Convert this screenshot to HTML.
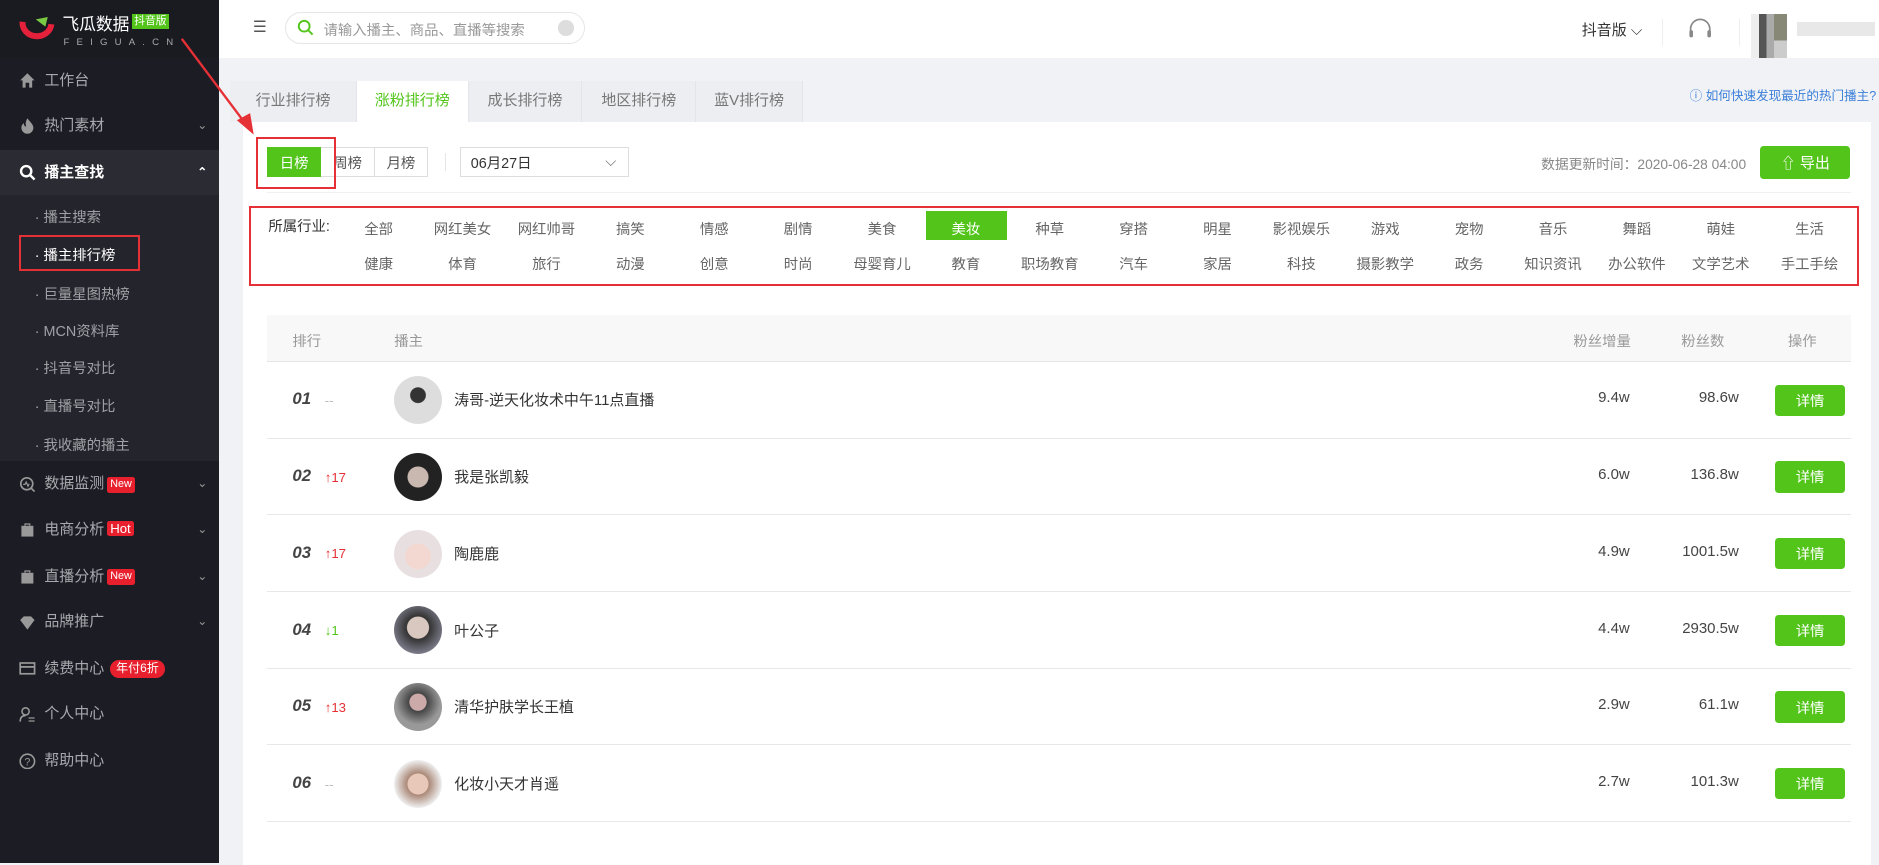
<!DOCTYPE html>
<html><head><meta charset="utf-8">
<style>
html{zoom:1.19834;background:#f0f2f5}
*{margin:0;padding:0;box-sizing:border-box}
body{width:1568px;height:700px;overflow:hidden;background:#f0f2f5;font-family:"Liberation Sans","Noto Sans CJK SC",sans-serif;font-size:12px;color:#555;position:relative}
.abs{position:absolute}
#side{left:0;top:0;width:183px;height:720px;background:#1c1c24}
.mi{position:absolute;left:0;width:183px;height:38px;line-height:38px;color:#a8a8ae;font-size:12.5px;padding-left:37px}
.mi .ic{position:absolute;left:16px;top:12px;width:14px;height:14px}
.mi .ar{position:absolute;right:10px;top:0;font-size:10px;color:#999}
.sub{position:absolute;left:29px;color:#a0a0a6;font-size:12px}
.badge{display:inline-block;background:#e8202e;color:#fff;font-size:9px;line-height:13px;padding:0 3px;border-radius:2px;margin-left:2px;vertical-align:1px}
#top{left:183px;top:0;width:1385px;height:48px;background:#fff}
.tab{position:absolute;top:68px;height:34px;line-height:34px;text-align:center;font-size:12.5px;color:#777;background:#eceef2;border-right:1px solid #e3e5ea}
#panel{left:203px;top:102px;width:1358px;height:620px;background:#fff}
.btn{position:absolute;top:123px;height:25px;display:flex;align-items:center;justify-content:center;border:1px solid #ddd;font-size:12px;color:#555;background:#fff}
.ind{position:absolute;font-size:12px;color:#666;width:70px;text-align:center}
.red{position:absolute;border:2px solid #e53036}
.row{position:absolute;left:223px;width:1322px;height:64px;border-bottom:1px solid #e8e8e8}
.rk{position:absolute;left:21px;top:23px;font-style:italic;font-weight:bold;font-size:14px;color:#444}
.ch{position:absolute;left:48px;top:26px;font-size:11px}
.av{position:absolute;left:106px;top:12px;width:40px;height:40px;border-radius:50%}
.nm{position:absolute;left:156px;top:23px;font-size:12.5px;color:#333}
.v1{position:absolute;right:185px;top:23px;font-size:12.5px;color:#444}
.v2{position:absolute;right:94px;top:23px;font-size:12.5px;color:#444}
.dt{position:absolute;left:1258px;top:19px;width:59px;height:26px;display:flex;align-items:center;justify-content:center;background:#52c41a;color:#fff;border-radius:3px;font-size:12px}
</style></head><body>
<div id="side" class="abs">
  <div class="abs" style="left:0;top:0;width:183px;height:48px;background:#1a1a21"></div>
  <svg class="abs" style="left:16px;top:14px" width="32" height="22" viewBox="0 0 32 22"><path d="M3 4 A12 11 0 0 0 27 6" stroke="#e5203a" stroke-width="5" fill="none"/><path d="M14 2 L24 0 L22 8 Z" fill="#7ac943"/></svg>
  <div class="abs" style="left:52px;top:9px;color:#fff;font-size:14px">飞瓜数据</div>
  <div class="abs" style="left:110px;top:12px;background:#52c41a;color:#fff;font-size:9px;line-height:12px;padding:0 2px">抖音版</div>
  <div class="abs" style="left:53px;top:31px;color:#aaa;font-size:8px;letter-spacing:6px">FEIGUA.CN</div>
  <div class="mi" style="top:48px"><svg class="ic" viewBox="0 0 14 14"><path d="M7 1 L13 7 H11 V13 H8.5 V9 H5.5 V13 H3 V7 H1 Z" fill="#999"/></svg>工作台</div>
  <div class="mi" style="top:86px"><svg class="ic" viewBox="0 0 14 14"><path d="M7 1 C9 4 12 6 12 9 A5 5 0 0 1 2 9 C2 7 3 6 4 5 C4 7 5 8 6 8 C5 5 6 3 7 1Z" fill="#999"/></svg>热门素材<span class="ar">⌄</span></div>
  <div class="mi" style="top:125px;background:#2b2b33;color:#fff;font-weight:bold"><svg class="ic" viewBox="0 0 14 14"><circle cx="6" cy="6" r="4.3" stroke="#fff" stroke-width="2" fill="none"/><path d="M9 9 L13 13" stroke="#fff" stroke-width="2"/></svg>播主查找<span class="ar" style="color:#fff">⌃</span></div>
  <div class="abs" style="left:0;top:163px;width:183px;height:222px;background:#24242c"></div>
  <div class="sub" style="top:172px">· 播主搜索</div>
  <div class="sub" style="top:204px;color:#fff">· 播主排行榜</div>
  <div class="sub" style="top:236px">· 巨量星图热榜</div>
  <div class="sub" style="top:267px">· MCN资料库</div>
  <div class="sub" style="top:298px">· 抖音号对比</div>
  <div class="sub" style="top:330px">· 直播号对比</div>
  <div class="sub" style="top:362px">· 我收藏的播主</div>
  <div class="red" style="left:16px;top:196px;width:101px;height:30px"></div>
  <div class="mi" style="top:385px"><svg class="ic" viewBox="0 0 14 14"><circle cx="6.5" cy="6.5" r="5" stroke="#999" stroke-width="1.4" fill="none"/><path d="M10 10 L13 13" stroke="#999" stroke-width="1.4"/><path d="M3.5 7 L5 7 L6 5 L7.5 8.5 L8.5 6.5" stroke="#999" fill="none"/></svg>数据监测<span class="badge">New</span><span class="ar">⌄</span></div>
  <div class="mi" style="top:423px"><svg class="ic" viewBox="0 0 14 14"><rect x="2" y="4" width="10" height="9" fill="#999"/><path d="M5 4 V2.5 H9 V4" stroke="#999" fill="none"/></svg>电商分析<span class="badge" style="font-size:11px">Hot</span><span class="ar">⌄</span></div>
  <div class="mi" style="top:462px"><svg class="ic" viewBox="0 0 14 14"><rect x="2" y="4" width="10" height="9" fill="#999"/><path d="M5 4 V2.5 H9 V4" stroke="#999" fill="none"/></svg>直播分析<span class="badge">New</span><span class="ar">⌄</span></div>
  <div class="mi" style="top:500px"><svg class="ic" viewBox="0 0 14 14"><path d="M1 5 L4 2 H10 L13 5 L7 13 Z" fill="#999"/></svg>品牌推广<span class="ar">⌄</span></div>
  <div class="mi" style="top:539px"><svg class="ic" viewBox="0 0 14 14"><rect x="1" y="2.5" width="12" height="9" stroke="#999" stroke-width="1.4" fill="none"/><rect x="1" y="5" width="12" height="1.5" fill="#999"/></svg>续费中心<span class="badge" style="border-radius:8px;font-size:10px;line-height:15px;padding:0 5px;margin-left:5px">年付6折</span></div>
  <div class="mi" style="top:577px"><svg class="ic" viewBox="0 0 14 14"><circle cx="5.5" cy="4.5" r="3" stroke="#999" stroke-width="1.3" fill="none"/><path d="M1 13 C1 9 3 8 5.5 8" stroke="#999" stroke-width="1.3" fill="none"/><path d="M8 10 H13 M8 12.5 H13" stroke="#999"/></svg>个人中心</div>
  <div class="mi" style="top:616px"><svg class="ic" viewBox="0 0 14 14"><circle cx="7" cy="7" r="6" stroke="#999" stroke-width="1.3" fill="none"/><text x="7" y="10.5" font-size="9" text-anchor="middle" fill="#999" font-family="Liberation Sans">?</text></svg>帮助中心</div>
</div>

<div id="top" class="abs">
  <div class="abs" style="left:28px;top:15px;font-size:13px;color:#555">☰</div>
  <div class="abs" style="left:55px;top:10px;width:250px;height:27px;border:1px solid #e6e6e6;border-radius:14px"></div>
  <svg class="abs" style="left:65px;top:16px" width="14" height="15"><circle cx="6" cy="6" r="4.5" stroke="#52c41a" stroke-width="1.6" fill="none"/><path d="M9.5 9.5 L13 13" stroke="#52c41a" stroke-width="1.6"/></svg>
  <div class="abs" style="left:87px;top:16px;color:#999;font-size:12px">请输入播主、商品、直播等搜索</div>
  <div class="abs" style="left:283px;top:17px;width:13px;height:13px;border-radius:50%;background:#ddd"></div>
  <div class="abs" style="left:1137px;top:16px;color:#333;font-size:12.5px">抖音版 ⌵</div>
  <div class="abs" style="left:1204px;top:16px;width:1px;height:22px;background:#eee"></div>
  <svg class="abs" style="left:1225px;top:14px" width="22" height="22"><path d="M3 13 V10 A8 8 0 0 1 19 10 V13" stroke="#888" stroke-width="1.4" fill="none"/><rect x="2" y="11" width="3" height="6" rx="1.5" fill="#888"/><rect x="17" y="11" width="3" height="6" rx="1.5" fill="#888"/></svg>
  <div class="abs" style="left:1268px;top:16px;width:1px;height:22px;background:#eee"></div>
  <div class="abs" style="left:1278px;top:12px;width:22px;height:36px;background:linear-gradient(90deg,#eee 0 30%,#555 30% 60%,#aaa 60%)"></div>
  <div class="abs" style="left:1297px;top:12px;width:11px;height:36px;background:linear-gradient(#887 0 60%,#ccc 60%)"></div>
  <div class="abs" style="left:1317px;top:18px;width:65px;height:12px;background:#e8e8e8"></div>
</div>

<div class="tab" style="left:192px;width:106px">行业排行榜</div>
<div class="tab" style="left:298px;width:93px;background:#fff;color:#52c41a">涨粉排行榜</div>
<div class="tab" style="left:391px;width:95px">成长排行榜</div>
<div class="tab" style="left:486px;width:95px">地区排行榜</div>
<div class="tab" style="left:581px;width:89px">蓝V排行榜</div>
<div class="abs" style="left:1410px;top:71px;color:#3b7fd9;font-size:10.5px">ⓘ 如何快速发现最近的热门播主?</div>

<div id="panel" class="abs"></div>
<div class="btn" style="left:223px;width:45px;background:#52c41a;border-color:#52c41a;color:#fff">日榜</div>
<div class="btn" style="left:268px;width:45px;border-left:none">周榜</div>
<div class="btn" style="left:313px;width:44px;border-left:none">月榜</div>
<div class="abs" style="left:371px;top:128px;width:1px;height:15px;background:#e5e5e5"></div>
<div class="btn" style="left:384px;width:141px;justify-content:flex-start;padding-left:8px;color:#333">06月27日<span style="position:absolute;right:10px;color:#666">⌵</span></div>
<div class="abs" style="left:1286px;top:128px;color:#888;font-size:11.5px">数据更新时间：2020-06-28 04:00</div>
<div class="abs" style="left:1469px;top:122px;width:75px;height:27px;background:#52c41a;border-radius:3px;color:#fff;display:flex;align-items:center;justify-content:center;font-size:12.5px">⇧ 导出</div>
<div class="abs" style="left:223px;top:160px;width:1322px;height:1px;background:#f0f0f0"></div>
<div class="red" style="left:214px;top:114px;width:66px;height:44px"></div>

<div class="abs" style="left:224px;top:179px;color:#333;font-size:12px">所属行业:</div>
<div class="abs" style="left:773px;top:176px;width:67px;height:24px;background:#52c41a"></div>
<div class="red" style="left:208px;top:172px;width:1343px;height:67px"></div>

<div class="abs" style="left:223px;top:263px;width:1322px;height:39px;background:#f8f8f8;border-bottom:1px solid #e5e5e5"></div>
<div class="abs" style="left:244px;top:275px;color:#999">排行</div>
<div class="abs" style="left:329px;top:275px;color:#999">播主</div>
<div class="abs" style="left:1313px;top:275px;color:#999">粉丝增量</div>
<div class="abs" style="left:1403px;top:275px;color:#999">粉丝数</div>
<div class="abs" style="left:1492px;top:275px;color:#999">操作</div>

<div class="row" style="top:302px"><div class="rk">01</div><div class="ch" style="color:#bbb">--</div><div class="av" style="background:radial-gradient(circle at 50% 40%,#333 0 20%,#ddd 22%)"></div><div class="nm">涛哥-逆天化妆术中午11点直播</div><div class="v1">9.4w</div><div class="v2">98.6w</div><div class="dt">详情</div></div>
<div class="row" style="top:366px"><div class="rk">02</div><div class="ch" style="color:#e53036">↑17</div><div class="av" style="background:radial-gradient(circle at 50% 50%,#c8b8b0 0 30%,#222 32%)"></div><div class="nm">我是张凯毅</div><div class="v1">6.0w</div><div class="v2">136.8w</div><div class="dt">详情</div></div>
<div class="row" style="top:430px"><div class="rk">03</div><div class="ch" style="color:#e53036">↑17</div><div class="av" style="background:radial-gradient(circle at 50% 55%,#f2d8d0 0 35%,#e8e0e0 37%)"></div><div class="nm">陶鹿鹿</div><div class="v1">4.9w</div><div class="v2">1001.5w</div><div class="dt">详情</div></div>
<div class="row" style="top:494px"><div class="rk">04</div><div class="ch" style="color:#52c41a">↓1</div><div class="av" style="background:radial-gradient(circle at 50% 45%,#d8c8c0 0 30%,#333 32%,#889 80%)"></div><div class="nm">叶公子</div><div class="v1">4.4w</div><div class="v2">2930.5w</div><div class="dt">详情</div></div>
<div class="row" style="top:558px"><div class="rk">05</div><div class="ch" style="color:#e53036">↑13</div><div class="av" style="background:radial-gradient(circle at 50% 40%,#caa 0 22%,#444 24%,#999 60%)"></div><div class="nm">清华护肤学长王植</div><div class="v1">2.9w</div><div class="v2">61.1w</div><div class="dt">详情</div></div>
<div class="row" style="top:622px"><div class="rk">06</div><div class="ch" style="color:#bbb">--</div><div class="av" style="background:radial-gradient(circle at 50% 50%,#e8c8b8 0 30%,#a87 32%,#eee 70%)"></div><div class="nm">化妆小天才肖遥</div><div class="v1">2.7w</div><div class="v2">101.3w</div><div class="dt">详情</div></div>

<svg class="abs" style="left:148px;top:28px" width="70" height="86"><path d="M4 4 L58 76" stroke="#e53036" stroke-width="2"/><path d="M64 84 L50 72 L61 66 Z" fill="#e53036"/></svg>

<div class="ind" style="left:281px;top:182px">全部</div>
<div class="ind" style="left:351px;top:182px">网红美女</div>
<div class="ind" style="left:421px;top:182px">网红帅哥</div>
<div class="ind" style="left:491px;top:182px">搞笑</div>
<div class="ind" style="left:561px;top:182px">情感</div>
<div class="ind" style="left:631px;top:182px">剧情</div>
<div class="ind" style="left:701px;top:182px">美食</div>
<div class="ind" style="left:771px;top:182px;color:#fff">美妆</div>
<div class="ind" style="left:841px;top:182px">种草</div>
<div class="ind" style="left:911px;top:182px">穿搭</div>
<div class="ind" style="left:981px;top:182px">明星</div>
<div class="ind" style="left:1051px;top:182px">影视娱乐</div>
<div class="ind" style="left:1121px;top:182px">游戏</div>
<div class="ind" style="left:1191px;top:182px">宠物</div>
<div class="ind" style="left:1261px;top:182px">音乐</div>
<div class="ind" style="left:1331px;top:182px">舞蹈</div>
<div class="ind" style="left:1401px;top:182px">萌娃</div>
<div class="ind" style="left:1475px;top:182px">生活</div>
<div class="ind" style="left:281px;top:211px">健康</div>
<div class="ind" style="left:351px;top:211px">体育</div>
<div class="ind" style="left:421px;top:211px">旅行</div>
<div class="ind" style="left:491px;top:211px">动漫</div>
<div class="ind" style="left:561px;top:211px">创意</div>
<div class="ind" style="left:631px;top:211px">时尚</div>
<div class="ind" style="left:701px;top:211px">母婴育儿</div>
<div class="ind" style="left:771px;top:211px">教育</div>
<div class="ind" style="left:841px;top:211px">职场教育</div>
<div class="ind" style="left:911px;top:211px">汽车</div>
<div class="ind" style="left:981px;top:211px">家居</div>
<div class="ind" style="left:1051px;top:211px">科技</div>
<div class="ind" style="left:1121px;top:211px">摄影教学</div>
<div class="ind" style="left:1191px;top:211px">政务</div>
<div class="ind" style="left:1261px;top:211px">知识资讯</div>
<div class="ind" style="left:1331px;top:211px">办公软件</div>
<div class="ind" style="left:1401px;top:211px">文学艺术</div>
<div class="ind" style="left:1475px;top:211px">手工手绘</div>
</body></html>
